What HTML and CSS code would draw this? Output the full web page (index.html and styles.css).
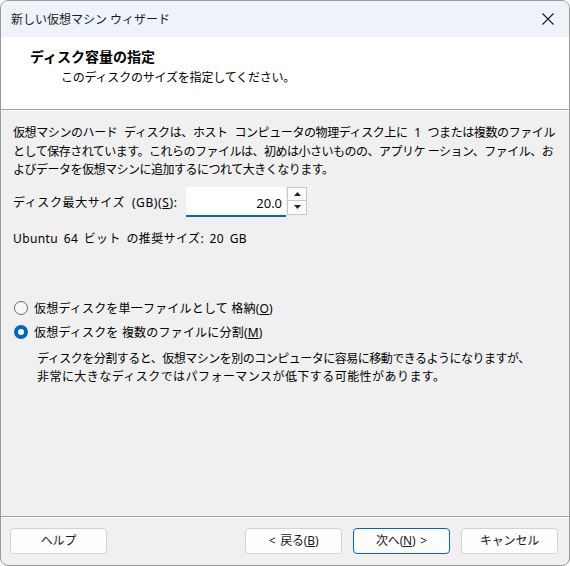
FILE: index.html
```html
<!DOCTYPE html>
<html lang="ja">
<head>
<meta charset="utf-8">
<title>新しい仮想マシン ウィザード</title>
<link rel="stylesheet" href="styles.css">
</head>
<body>
<div class="window">
  <div class="titlebar">
    <span class="title">新しい仮想マシン ウィザード</span>
    <span class="close">
      <svg width="12" height="12" viewBox="0 0 12 12"><path d="M0.5 0.5 L11.5 11.5 M11.5 0.5 L0.5 11.5" stroke="#1b1b1b" stroke-width="1.1" fill="none"/></svg>
    </span>
  </div>
  <div class="header">
    <div class="heading">ディスク容量の指定</div>
    <div class="subtitle">このディスクのサイズを指定してください。</div>
  </div>
  <div class="content">
    <p class="desc"><span class="l1">仮想マシンのハード ディスクは、ホスト コンピュータの物理ディスク上に 1 つまたは複数のファイル</span><br>として保存されています。これらのファイルは、初めは小さいものの、アプリケ ーション、ファイル、お<br>よびデータを仮想マシンに追加するにつれて大きくなります。</p>
    <div class="size-row">
      <span class="label">ディスク最大サイズ (GB)(<u>S</u>):</span>
      <span class="input">20.0</span>
      <span class="spin">
        <span class="spin-btn"><svg width="7" height="4" viewBox="0 0 7 4"><path d="M0 4 L3.5 0 L7 4 Z" fill="#222"/></svg></span>
        <span class="spin-btn"><svg width="7" height="4" viewBox="0 0 7 4"><path d="M0 0 L3.5 4 L7 0 Z" fill="#222"/></svg></span>
      </span>
    </div>
    <div class="recommend">Ubuntu 64 ビット の推奨サイズ: 20 GB</div>
    <div class="radios">
      <div class="radio-row"><span class="radio"></span><span>仮想ディスクを単一ファイルとして 格納(<u>O</u>)</span></div>
      <div class="radio-row"><span class="radio checked"></span><span>仮想ディスクを 複数のファイルに分割(<u>M</u>)</span></div>
      <p class="note">ディスクを分割すると、仮想マシンを別のコンピュータに容易に移動できるようになりますが、<br><span class="n2">非常に大きなディスクではパフォーマンスが低下する可能性があります。</span></p>
    </div>
  </div>
  <div class="footer">
    <button class="btn">ヘルプ</button>
    <span class="spacer"></span>
    <button class="btn">&lt; 戻る(<u>B</u>)</button>
    <button class="btn default">次へ(<u>N</u>) &gt;</button>
    <button class="btn">キャンセル</button>
  </div>
</div>
</body>
</html>
```
FILE: styles.css
```css
* { box-sizing: border-box; }
html, body { margin: 0; padding: 0; background: #ffffff; }
body {
  width: 570px;
  height: 566px;
  font-family: "Noto Sans", "Noto Sans CJK JP", sans-serif;
  font-size: 12px;
  color: #1a1a1a;
}
.window {
  width: 570px;
  height: 566px;
  border: 1px solid #9a9a9a;
  border-radius: 8px;
  overflow: hidden;
  display: flex;
  flex-direction: column;
  background: #f0f0f0;
}
.titlebar {
  height: 36px;
  flex: none;
  background: #eef3f9;
  display: flex;
  align-items: center;
  padding: 0 15px 0 10px;
}
.title {
  flex: 1;
  font-size: 12px;
  color: #1a1a1a;
  line-height: 16px;
  padding-top: 1px;
}
.close { display: flex; align-items: center; }
.header {
  height: 73px;
  flex: none;
  background: #ffffff;
  padding: 10px 0 0 29px;
  border-bottom: 1px solid #a0a0a0;
}
.heading {
  font-size: 14px;
  font-weight: bold;
  line-height: 20px;
  color: #000;
}
.subtitle {
  margin-left: 31px;
  margin-top: 2px;
  line-height: 18px;
  letter-spacing: -0.2px;
  color: #000;
}
.content {
  flex: 1;
  border-top: 1px solid #ffffff;
  padding: 13px 0 0 12px;
}
.desc {
  margin: 0;
  line-height: 18.5px;
  letter-spacing: -0.5px;
  color: #000;
}
.desc .l1 { word-spacing: 4px; letter-spacing: -0.4px; }
.size-row {
  display: flex;
  align-items: center;
  margin-top: 7px;
  height: 30px;
}
.label {
  letter-spacing: 0.6px;
  word-spacing: 3px;
  width: 173px;
  color: #000;
  white-space: nowrap;
}
.input {
  width: 100px;
  height: 30px;
  background: #ffffff;
  border-bottom: 2px solid #0067c0;
  text-align: right;
  padding: 6px 4px 0 0;
  font-family: "Open Sans", "Noto Sans", sans-serif;
  font-size: 13px;
  line-height: 20px;
  color: #000;
}
.spin {
  margin-left: 1px;
  width: 20px;
  height: 28px;
  display: flex;
  flex-direction: column;
  border: 1px solid #c9c9c9;
  background: #fbfbfb;
  align-self: flex-start;
}
.spin-btn {
  flex: 1;
  display: flex;
  align-items: center;
  justify-content: center;
}
.spin-btn + .spin-btn { border-top: 1px solid #c9c9c9; }
.recommend {
  margin-top: 13px;
  line-height: 18px;
  letter-spacing: 0.4px;
  word-spacing: 2px;
  color: #000;
}
.radios { margin-top: 48px; }
.radio-row {
  display: flex;
  align-items: center;
  height: 24px;
  letter-spacing: 0.2px;
  color: #000;
}
.radio {
  width: 14px;
  height: 14px;
  border-radius: 50%;
  border: 1px solid #6b6b6b;
  background: #f7f7f7;
  margin: 0 6px 0 1px;
  flex: none;
}
.radio.checked {
  border: 4px solid #0067c0;
  background: #ffffff;
}
.note {
  margin: 6px 0 0 24px;
  line-height: 18.5px;
  letter-spacing: -0.5px;
  color: #000;
}
.note .n2 { letter-spacing: 0.45px; }
.footer {
  flex: none;
  height: 49px;
  border-top: 1px solid #a0a0a0;
  box-shadow: inset 0 1px 0 #ffffff;
  display: flex;
  align-items: flex-start;
  padding: 11px 11px 0 9px;
  gap: 11px;
}
.spacer { flex: 1; }
.btn {
  width: 97px;
  height: 26px;
  background: #fdfdfd;
  border: 1px solid #d3d3d3;
  border-radius: 4px;
  font-family: "Noto Sans", "Noto Sans CJK JP", sans-serif;
  font-size: 12px;
  letter-spacing: -0.2px;
  word-spacing: 2px;
  color: #1a1a1a;
  padding: 0;
  line-height: 24px;
}
.btn.default { border-color: #0067c0; }
```
